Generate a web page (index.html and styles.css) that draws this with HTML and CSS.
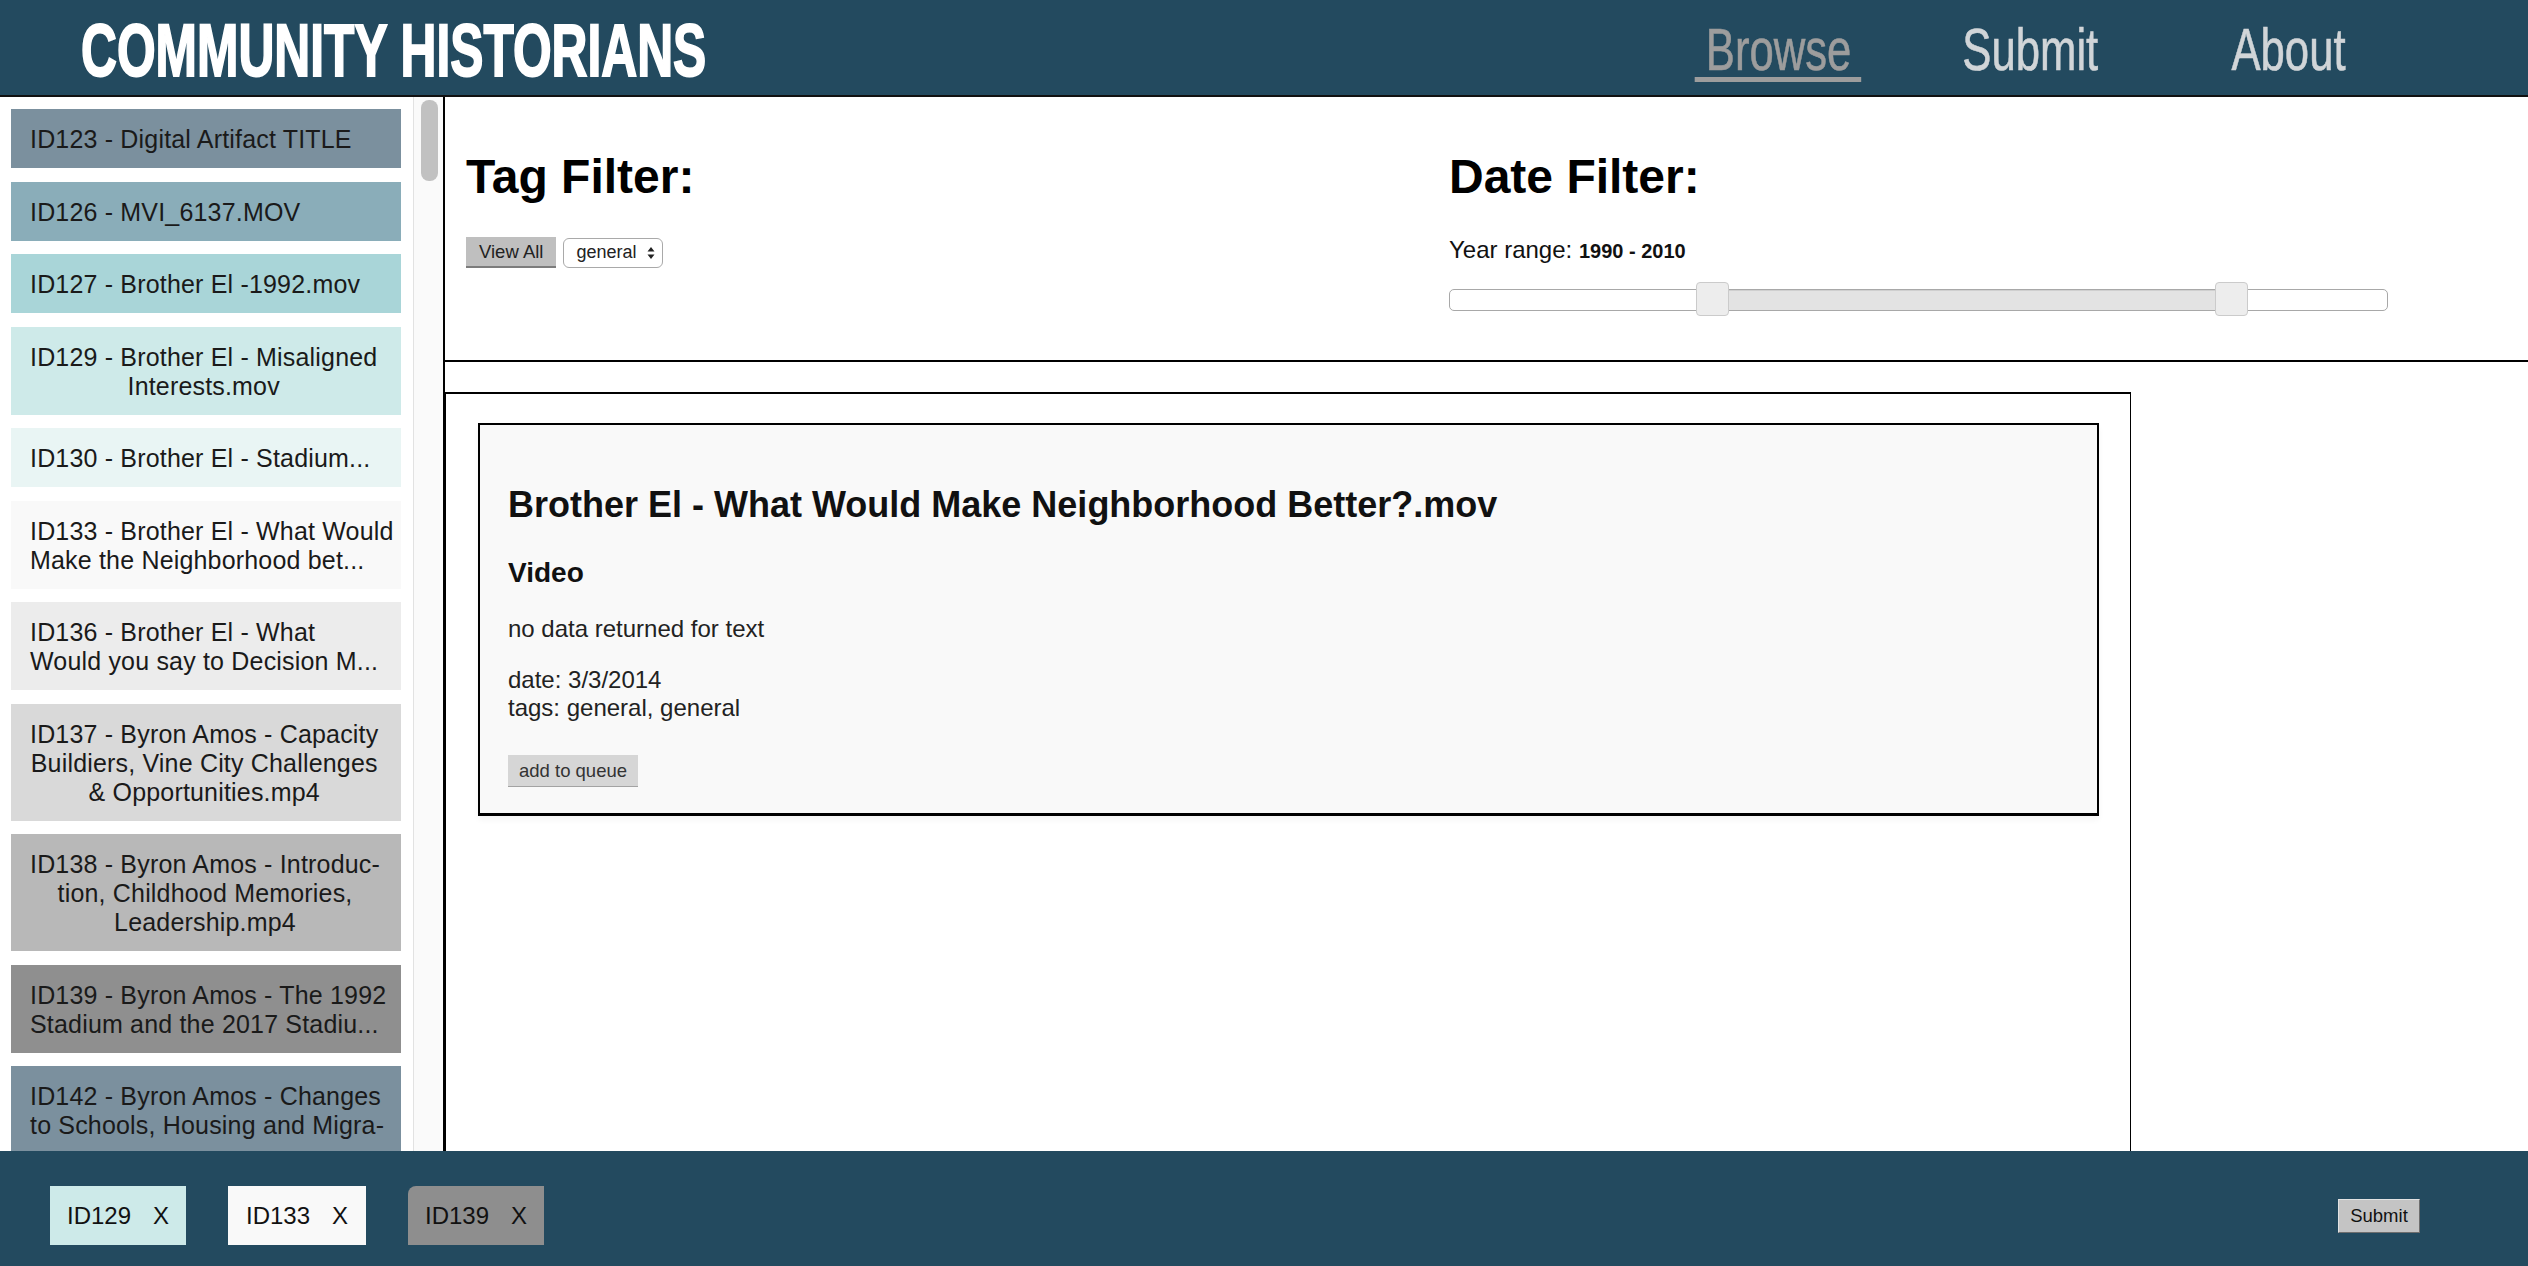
FILE: index.html
```html
<!DOCTYPE html>
<html lang="en">
<head>
<meta charset="utf-8">
<title>Community Historians</title>
<link rel="stylesheet" href="styles.css">
</head>
<body>
<header class="topbar">
  <h1 class="brand">COMMUNITY HISTORIANS</h1>
  <nav class="nav">
    <a class="active" href="#">Browse</a>
    <a class="mid" href="#">Submit</a>
    <a href="#">About</a>
  </nav>
</header>

<div class="layout">
  <aside class="sidebar">
    <div class="list">
      <div class="item c1"><span class="t">ID123 - Digital Artifact TITLE</span></div>
      <div class="item c2"><span class="t">ID126 - MVI_6137.MOV</span></div>
      <div class="item c3"><span class="t">ID127 - Brother El -1992.mov</span></div>
      <div class="item c4"><span class="t">ID129 - Brother El - Misaligned<br>Interests.mov</span></div>
      <div class="item c5"><span class="t">ID130 - Brother El - Stadium...</span></div>
      <div class="item c6 clamp"><span class="t">ID133 - Brother El - What Would<br>Make the Neighborhood bet...</span></div>
      <div class="item c7 clamp"><span class="t">ID136 - Brother El - What<br>Would you say to Decision M...</span></div>
      <div class="item c8"><span class="t">ID137 - Byron Amos - Capacity<br>Buildiers, Vine City Challenges<br>&amp; Opportunities.mp4</span></div>
      <div class="item c9"><span class="t">ID138 - Byron Amos - Introduc-<br>tion, Childhood Memories,<br>Leadership.mp4</span></div>
      <div class="item c10 clamp"><span class="t">ID139 - Byron Amos - The 1992<br>Stadium and the 2017 Stadiu...</span></div>
      <div class="item c1 clamp tall"><span class="t">ID142 - Byron Amos - Changes<br>to Schools, Housing and Migra-</span></div>
    </div>
    <div class="track"><div class="thumb"></div></div>
  </aside>

  <main class="main">
    <section class="filters">
      <div class="tag-col">
        <h2 class="filter-title">Tag Filter:</h2>
        <div class="tag-row">
          <button class="btn-viewall" type="button">View All</button>
          <div class="select">
            <span>general</span>
            <svg class="arrows" width="8" height="14" viewBox="0 0 8 14"><path d="M4 1 L7.5 5.5 H0.5 Z M4 13 L7.5 8.5 H0.5 Z" fill="#222"/></svg>
          </div>
        </div>
      </div>
      <div class="date-col">
        <h2 class="filter-title">Date Filter:</h2>
        <p class="year">Year range: <strong>1990 - 2010</strong></p>
        <div class="slider">
          <div class="range" style="left:28%;width:55.4%"></div>
          <div class="handle" style="left:26.3%"></div>
          <div class="handle" style="left:81.6%"></div>
        </div>
      </div>
    </section>

    <section class="content">
      <div class="panel">
        <article class="card">
          <h3 class="card-title">Brother El - What Would Make Neighborhood Better?.mov</h3>
          <h4 class="card-type">Video</h4>
          <p class="desc">no data returned for text</p>
          <p class="meta">date: 3/3/2014<br>tags: general, general</p>
          <button class="add" type="button">add to queue</button>
        </article>
      </div>
    </section>
  </main>
</div>

<footer class="bottombar">
  <div class="queue">
    <div class="chip q1"><span>ID129</span><span class="x">X</span></div>
    <div class="chip q2"><span>ID133</span><span class="x">X</span></div>
    <div class="chip q3"><span>ID139</span><span class="x">X</span></div>
  </div>
  <button class="submit" type="button">Submit</button>
</footer>
</body>
</html>
```

FILE: styles.css
```css
* { box-sizing: border-box; }

html, body {
  margin: 0;
  padding: 0;
  height: 100%;
}

body {
  display: flex;
  flex-direction: column;
  height: 100vh;
  overflow: hidden;
  font-family: "Liberation Sans", Arial, Helvetica, sans-serif;
  color: #111;
  background: #fff;
}

/* ---------- header ---------- */
.topbar {
  flex: 0 0 auto;
  height: 97px;
  background: #234a5f;
  border-bottom: 2px solid #111;
  display: flex;
  justify-content: space-between;
  align-items: flex-start;
}

.brand {
  margin: 0 0 0 81px;
  padding-top: 13px;
  font-size: 75px;
  font-weight: 700;
  line-height: 1;
  color: #fff;
  white-space: nowrap;
  transform: scaleX(0.663);
  transform-origin: left top;
  -webkit-text-stroke: 2px #fff;
}

.nav {
  display: flex;
  margin-right: 182px;
  padding-top: 21px;
  transform: scaleX(0.74);
  transform-origin: right top;
}

.nav a {
  position: relative;
  font-size: 59px;
  line-height: 1;
  color: #d1d5d8;
  text-decoration: none;
  white-space: nowrap;
  -webkit-text-stroke: 0.6px #d1d5d8;
}

.nav a.active {
  margin-right: 150px;
  color: #9d9d9d;
  -webkit-text-stroke: 0.6px #9d9d9d;
}

.nav a.mid { margin-right: 180px; }

.nav a.active::after {
  content: "";
  position: absolute;
  left: -15px;
  right: -13px;
  top: 56px;
  height: 5px;
  background: #9d9d9d;
}

/* ---------- layout ---------- */
.layout {
  flex: 1 1 auto;
  display: flex;
  min-height: 0;
}

/* ---------- sidebar ---------- */
.sidebar {
  flex: 0 0 443px;
  display: flex;
  background: #fff;
}

.list {
  width: 413px;
  padding: 12px 12px 0 11px;
  overflow: hidden;
}

.item {
  margin-bottom: 13.5px;
  padding: 16px 2px 14px 19px;
  font-size: 25px;
  line-height: 29px;
  letter-spacing: 0.18px;
  color: #1a1a1a;
  white-space: nowrap;
  overflow: hidden;
}

.item .t {
  display: inline-block;
  text-align: center;
}

.item.clamp .t { text-align: left; }
.item.tall { padding-bottom: 40px; }

.c1 { background: #7b909e; }
.c2 { background: #8aadb9; }
.c3 { background: #a9d5d8; }
.c4 { background: #ceeae9; }
.c5 { background: #e9f5f4; }
.c6 { background: #f9f9f9; }
.c7 { background: #ececec; }
.c8 { background: #d9d9d9; }
.c9 { background: #b8b8b8; }
.c10 { background: #8f8f8f; }

.track {
  width: 30px;
  border-left: 1px solid #e2e2e2;
  background: #fafafa;
}

.thumb {
  margin: 3px 0 0 7px;
  width: 17px;
  height: 81px;
  border-radius: 8px;
  background: #c1c1c1;
}

/* ---------- main ---------- */
.main {
  flex: 1 1 auto;
  min-width: 0;
  display: flex;
  flex-direction: column;
  border-left: 2px solid #000;
}

.filters {
  flex: 0 0 265px;
  display: grid;
  grid-template-columns: 983px 1fr;
  padding: 52px 0 0 21px;
  border-bottom: 2px solid #000;
}

.filter-title {
  margin: 0;
  font-size: 48px;
  font-weight: 700;
  line-height: 55px;
  color: #000;
}

.tag-row {
  margin-top: 33px;
  display: flex;
  align-items: center;
  gap: 7px;
}

.btn-viewall {
  height: 31px;
  padding: 0 13px;
  border: 0;
  border-bottom: 2px solid #7c7c7c;
  background: #bfbfbf;
  font-family: inherit;
  font-size: 18.5px;
  color: #222;
}

.select {
  width: 100px;
  height: 30px;
  display: flex;
  align-items: center;
  justify-content: space-between;
  padding: 0 7px 0 12px;
  border: 1px solid #a9a9a9;
  border-radius: 6px;
  background: #fff;
  font-size: 18px;
  color: #222;
}

.year {
  margin: 32px 0 0;
  font-size: 24px;
  line-height: 28px;
  color: #111;
}

.year strong { font-size: 20px; }

.slider {
  position: relative;
  margin-top: 24px;
  width: 939px;
  height: 22px;
  border: 1px solid #a8a8a8;
  border-radius: 5px;
  background: #fff;
}

.range {
  position: absolute;
  top: 0;
  bottom: 0;
  background: #e3e3e3;
  border-top: 1px solid #cfcfcf;
}

.handle {
  position: absolute;
  top: -8px;
  width: 33px;
  height: 34px;
  border: 1px solid #cbcbcb;
  border-radius: 4px;
  background: #ededed;
}

/* ---------- content panel ---------- */
.content {
  flex: 1 1 auto;
  min-height: 0;
  padding-top: 30px;
  display: flex;
}

.panel {
  width: 1686px;
  border-top: 2px solid #000;
  border-left: 1px solid #000;
  border-right: 1px solid #000;
  padding: 29px 31px 0 32px;
}

.card {
  border: 2px solid #000;
  border-bottom-width: 3px;
  background: #f9f9f9;
  padding: 0 28px 26px;
  box-shadow: 0 4px 6px rgba(0, 0, 0, 0.04);
}

.card-title {
  margin: 59px 0 0;
  font-size: 36px;
  font-weight: 700;
  line-height: 42px;
  color: #111;
}

.card-type {
  margin: 31px 0 0;
  font-size: 28px;
  font-weight: 700;
  line-height: 32px;
  color: #111;
}

.desc {
  margin: 26px 0 0;
  font-size: 24px;
  line-height: 28px;
  color: #222;
}

.meta {
  margin: 23px 0 0;
  font-size: 24px;
  line-height: 28px;
  color: #222;
}

.add {
  display: block;
  margin-top: 33px;
  height: 32px;
  padding: 0 11px;
  border: 0;
  border-bottom: 1px solid #a3a3a3;
  background: #d6d6d6;
  font-family: inherit;
  font-size: 18.5px;
  color: #333;
}

/* ---------- bottom bar ---------- */
.bottombar {
  flex: 0 0 115px;
  background: #234a5f;
  display: flex;
  align-items: center;
  justify-content: space-between;
  padding: 14px 108px 0 50px;
}

.queue {
  display: flex;
  gap: 42px;
}

.chip {
  width: 136px;
  height: 59px;
  display: flex;
  align-items: center;
  justify-content: center;
  font-size: 24px;
  color: #111;
}

.chip .x { margin-left: 22px; }

.q1 { background: #cdeae9; }
.q2 { background: #f9f9f9; width: 138px; }
.q3 { background: #8e8e8e; border-top-left-radius: 8px; }

.submit {
  width: 82px;
  height: 34px;
  padding: 0;
  border: 1px solid;
  border-color: #e2e2e2 #6e6e6e #6e6e6e #e2e2e2;
  background: #c4c4c4;
  font-family: inherit;
  font-size: 18.5px;
  color: #111;
}
```
